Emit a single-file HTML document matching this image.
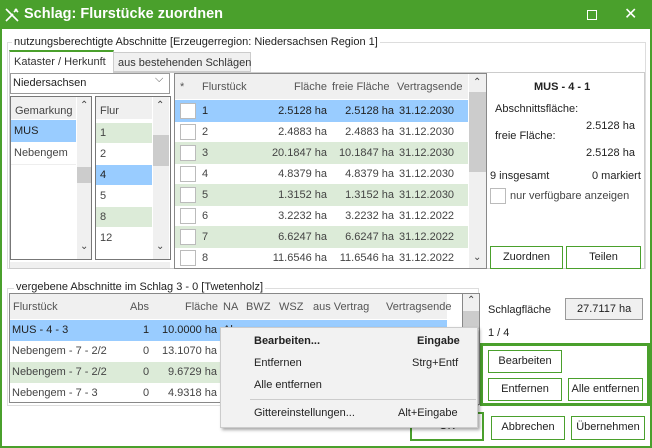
<!DOCTYPE html>
<html><head><meta charset="utf-8"><style>
*{box-sizing:border-box;margin:0;padding:0}
body{width:652px;height:448px;overflow:hidden;font-family:"Liberation Sans",sans-serif;font-size:11px;color:#222;background:#fff;position:relative}
.a{position:absolute}
.t{position:absolute;white-space:nowrap}
.btn{position:absolute;border:1px solid #4aa02c;background:#fff;text-align:center;line-height:21px;font-size:11px;white-space:nowrap}
.row{position:absolute;left:0;right:0;height:22px}
.cb{position:absolute;left:5px;top:3px;width:16px;height:16px;border:1px solid #bbb;background:#fff}
.sb{position:absolute;background:#f0f0f0}
</style></head><body>
<div class="a" style="left:0;top:0;width:652px;height:448px;border:2px solid #4aa02c;border-top:none"></div>
<div class="a" style="left:0;top:0;width:652px;height:29px;background:#4aa02c"></div>
<svg class="a" style="left:4px;top:7px" width="16" height="16" viewBox="0 0 16 16"><path d="M2 2L14 14M2 14L9 7M11 2L14 5M10 5l3-3" stroke="#fff" stroke-width="1.6" fill="none"/></svg>
<div class="t" style="left:24px;top:6px;color:#fff;font-weight:bold;font-size:14.5px">Schlag: Flurstücke zuordnen</div>
<div class="a" style="left:587px;top:10px;width:10px;height:10px;border:1px solid #fff"></div>
<div class="t" style="left:624px;top:4px;color:#fff;font-size:16px">✕</div>

<!-- group 1 -->
<div class="a" style="left:7px;top:42px;width:639px;height:227px;border:1px solid #ddd"></div>
<div class="t" style="left:12px;top:36px;background:#fff;padding:0 2px">nutzungsberechtigte Abschnitte [Erzeugerregion: Niedersachsen Region 1]</div>
<div class="a" style="left:9px;top:72px;width:636px;height:197px;border:1px solid #ccc"></div>
<div class="a" style="left:9px;top:50px;width:105px;height:23px;background:#fff;border:1px solid #ccc;border-top:2px solid #4aa02c;border-bottom:none"></div>
<div class="t" style="left:14px;top:56px;color:#333">Kataster / Herkunft</div>
<div class="a" style="left:113px;top:52px;width:138px;height:20px;background:#f0f0f0;border:1px solid #ccc"></div>
<div class="t" style="left:118px;top:57px;color:#333">aus bestehenden Schlägen</div>

<div class="a" style="left:10px;top:73px;width:160px;height:21px;border:1px solid #999;background:#fff"></div>
<div class="t" style="left:13px;top:77px">Niedersachsen</div>
<div class="t" style="left:155px;top:73px;color:#555;font-size:11px">⌵</div>

<div class="a" style="left:10px;top:96px;width:82px;height:164px;border:1px solid #777;background:#fff"></div>
<div class="a" style="left:11px;top:97px;width:65px;height:22px;background:#f0f0f0"></div>
<div class="t" style="left:15px;top:105px;color:#444">Gemarkung</div>
<div class="a" style="left:11px;top:120px;width:65px;height:22px;background:#99ccff"></div>
<div class="t" style="left:14px;top:125px">MUS</div>
<div class="t" style="left:14px;top:147px;color:#444">Nebengem</div>
<div class="a" style="left:11px;top:164px;width:65px;height:1px;background:#eee"></div>
<div class="sb" style="left:77px;top:97px;width:14px;height:162px"></div>
<div class="a" style="left:77px;top:167px;width:14px;height:16px;background:#ccc"></div>
<div class="t" style="left:80px;top:100px;font-size:10px;color:#444">⌃</div>
<div class="t" style="left:80px;top:241px;font-size:10px;color:#444">⌄</div>
<div class="a" style="left:10px;top:262px;width:160px;height:6px;background:#f0f0f0"></div>

<div class="a" style="left:95px;top:96px;width:76px;height:164px;border:1px solid #777;background:#fff"></div>
<div class="a" style="left:96px;top:97px;width:56px;height:22px;background:#f0f0f0"></div>
<div class="t" style="left:100px;top:105px;color:#444">Flur</div>
<div class="a" style="left:96px;top:123px;width:56px;height:20px;background:#dcebd8"></div>
<div class="t" style="left:100px;top:127px;color:#444">1</div>
<div class="t" style="left:100px;top:148px;color:#444">2</div>
<div class="a" style="left:96px;top:165px;width:56px;height:20px;background:#99ccff"></div>
<div class="t" style="left:100px;top:169px">4</div>
<div class="t" style="left:100px;top:190px;color:#444">5</div>
<div class="a" style="left:96px;top:207px;width:56px;height:20px;background:#dcebd8"></div>
<div class="t" style="left:100px;top:211px;color:#444">8</div>
<div class="t" style="left:100px;top:232px;color:#444">12</div>
<div class="sb" style="left:153px;top:97px;width:16px;height:162px"></div>
<div class="a" style="left:153px;top:135px;width:16px;height:31px;background:#ccc"></div>
<div class="t" style="left:156px;top:100px;font-size:10px;color:#444">⌃</div>
<div class="t" style="left:156px;top:241px;font-size:10px;color:#444">⌄</div>

<!-- grid 1 -->
<div class="a" style="left:174px;top:73px;width:313px;height:196px;border:1px solid #888;background:#fff;overflow:hidden">
 <div class="a" style="left:0;top:0;width:293px;height:25px;background:#f0f0f0"></div>
 <div class="t" style="left:5px;top:7px;color:#555">*</div>
 <div class="t" style="left:27px;top:7px;color:#555">Flurstück</div>
 <div class="t" style="left:106px;top:7px;color:#555;width:46px;text-align:right">Fläche</div>
 <div class="t" style="left:157px;top:7px;color:#555">freie Fläche</div>
 <div class="t" style="left:222px;top:7px;color:#555">Vertragsende</div>
 <div class="a" style="left:0;top:26px;width:293px;height:170px">
  <div class="row" style="top:0;background:#99ccff"><div class="cb"></div><div class="t" style="left:27px;top:5px">1</div><div class="t" style="left:60px;top:5px;width:92px;text-align:right">2.5128 ha</div><div class="t" style="left:150px;top:5px;width:69px;text-align:right">2.5128 ha</div><div class="t" style="left:224px;top:5px">31.12.2030</div></div>
  <div class="row" style="top:21px;color:#444"><div class="cb"></div><div class="t" style="left:27px;top:5px">2</div><div class="t" style="left:60px;top:5px;width:92px;text-align:right">2.4883 ha</div><div class="t" style="left:150px;top:5px;width:69px;text-align:right">2.4883 ha</div><div class="t" style="left:224px;top:5px">31.12.2030</div></div>
  <div class="row" style="top:42px;background:#dcebd8;color:#444"><div class="cb"></div><div class="t" style="left:27px;top:5px">3</div><div class="t" style="left:60px;top:5px;width:92px;text-align:right">20.1847 ha</div><div class="t" style="left:150px;top:5px;width:69px;text-align:right">10.1847 ha</div><div class="t" style="left:224px;top:5px">31.12.2030</div></div>
  <div class="row" style="top:63px;color:#444"><div class="cb"></div><div class="t" style="left:27px;top:5px">4</div><div class="t" style="left:60px;top:5px;width:92px;text-align:right">4.8379 ha</div><div class="t" style="left:150px;top:5px;width:69px;text-align:right">4.8379 ha</div><div class="t" style="left:224px;top:5px">31.12.2030</div></div>
  <div class="row" style="top:84px;background:#dcebd8;color:#444"><div class="cb"></div><div class="t" style="left:27px;top:5px">5</div><div class="t" style="left:60px;top:5px;width:92px;text-align:right">1.3152 ha</div><div class="t" style="left:150px;top:5px;width:69px;text-align:right">1.3152 ha</div><div class="t" style="left:224px;top:5px">31.12.2030</div></div>
  <div class="row" style="top:105px;color:#444"><div class="cb"></div><div class="t" style="left:27px;top:5px">6</div><div class="t" style="left:60px;top:5px;width:92px;text-align:right">3.2232 ha</div><div class="t" style="left:150px;top:5px;width:69px;text-align:right">3.2232 ha</div><div class="t" style="left:224px;top:5px">31.12.2022</div></div>
  <div class="row" style="top:126px;background:#dcebd8;color:#444"><div class="cb"></div><div class="t" style="left:27px;top:5px">7</div><div class="t" style="left:60px;top:5px;width:92px;text-align:right">6.6247 ha</div><div class="t" style="left:150px;top:5px;width:69px;text-align:right">6.6247 ha</div><div class="t" style="left:224px;top:5px">31.12.2022</div></div>
  <div class="row" style="top:147px;color:#444"><div class="cb"></div><div class="t" style="left:27px;top:5px">8</div><div class="t" style="left:60px;top:5px;width:92px;text-align:right">11.6546 ha</div><div class="t" style="left:150px;top:5px;width:69px;text-align:right">11.6546 ha</div><div class="t" style="left:224px;top:5px">31.12.2022</div></div>
 </div>
 <div class="sb" style="left:294px;top:0;width:17px;height:194px"></div>
 <div class="a" style="left:294px;top:18px;width:17px;height:80px;background:#ccc"></div>
 <div class="t" style="left:298px;top:3px;font-size:10px;color:#444">⌃</div>
 <div class="t" style="left:298px;top:178px;font-size:10px;color:#444">⌄</div>
</div>

<!-- right panel 1 -->
<div class="t" style="left:534px;top:81px;font-weight:bold">MUS - 4 - 1</div>
<div class="t" style="left:495px;top:103px">Abschnittsfläche:</div>
<div class="t" style="left:586px;top:120px">2.5128 ha</div>
<div class="t" style="left:495px;top:130px">freie Fläche:</div>
<div class="t" style="left:586px;top:147px">2.5128 ha</div>
<div class="t" style="left:490px;top:170px">9 insgesamt</div>
<div class="t" style="left:592px;top:170px">0 markiert</div>
<div class="a" style="left:490px;top:188px;width:16px;height:16px;border:1px solid #bbb"></div>
<div class="t" style="left:510px;top:190px;color:#444">nur verfügbare anzeigen</div>
<div class="btn" style="left:490px;top:246px;width:73px;height:23px">Zuordnen</div>
<div class="btn" style="left:566px;top:246px;width:75px;height:23px">Teilen</div>

<!-- group 2 -->
<div class="a" style="left:7px;top:288px;width:472px;height:118px;border:1px solid #ddd"></div>
<div class="t" style="left:14px;top:281px;background:#fff;padding:0 2px">vergebene Abschnitte im Schlag 3 - 0 [Twetenholz]</div>
<div class="a" style="left:9px;top:293px;width:462px;height:110px;border:1px solid #888;background:#fff;overflow:hidden">
 <div class="a" style="left:0;top:0;width:437px;height:25px;background:#f0f0f0"></div>
 <div class="t" style="left:3px;top:7px;color:#555">Flurstück</div>
 <div class="t" style="left:120px;top:7px;color:#555">Abs</div>
 <div class="t" style="left:175px;top:7px;color:#555">Fläche</div>
 <div class="t" style="left:213px;top:7px;color:#555">NA</div>
 <div class="t" style="left:236px;top:7px;color:#555">BWZ</div>
 <div class="t" style="left:269px;top:7px;color:#555">WSZ</div>
 <div class="t" style="left:303px;top:7px;color:#555">aus Vertrag</div>
 <div class="t" style="left:376px;top:7px;color:#555">Vertragsende</div>
 <div class="a" style="left:0;top:26px;width:437px;height:21px;background:#99ccff"></div>
 <div class="t" style="left:2px;top:30px">MUS - 4 - 3</div><div class="t" style="left:133px;top:30px">1</div><div class="t" style="left:152px;top:30px">10.0000 ha</div><div class="t" style="left:213px;top:30px">Al</div>
 <div class="t" style="left:2px;top:51px;color:#444">Nebengem - 7 - 2/2</div><div class="t" style="left:133px;top:51px;color:#444">0</div><div class="t" style="left:152px;top:51px;color:#444">13.1070 ha</div>
 <div class="a" style="left:0;top:68px;width:437px;height:21px;background:#dcebd8"></div>
 <div class="t" style="left:2px;top:72px;color:#444">Nebengem - 7 - 2/2</div><div class="t" style="left:133px;top:72px;color:#444">0</div><div class="t" style="left:158px;top:72px;color:#444">9.6729 ha</div>
 <div class="t" style="left:2px;top:93px;color:#444">Nebengem - 7 - 3</div><div class="t" style="left:133px;top:93px;color:#444">0</div><div class="t" style="left:158px;top:93px;color:#444">4.9318 ha</div>
 <div class="sb" style="left:453px;top:0;width:10px;height:110px"></div>
</div>
<div class="a" style="left:462px;top:293px;width:18px;height:112px;border:1px solid #888;background:#f0f0f0"></div>
<div class="a" style="left:463px;top:311px;width:16px;height:18px;background:#ccc"></div>
<div class="t" style="left:467px;top:295px;font-size:10px;color:#444">⌃</div>

<!-- right panel 2 -->
<div class="t" style="left:488px;top:304px">Schlagfläche</div>
<div class="a" style="left:565px;top:298px;width:78px;height:22px;border:1px solid #999;background:#f0f0f0"></div>
<div class="t" style="left:577px;top:303px">27.7117 ha</div>
<div class="t" style="left:488px;top:327px">1 / 4</div>
<div class="a" style="left:480px;top:343px;width:170px;height:63px;border:3px solid #4aa02c"></div>
<div class="btn" style="left:488px;top:350px;width:74px;height:23px">Bearbeiten</div>
<div class="btn" style="left:488px;top:378px;width:74px;height:23px">Entfernen</div>
<div class="btn" style="left:568px;top:378px;width:75px;height:23px">Alle entfernen</div>
<div class="btn" style="left:410px;top:412px;width:74px;height:29px;border:2px solid #4aa02c;line-height:25px">OK</div>
<div class="btn" style="left:491px;top:416px;width:74px;height:24px">Abbrechen</div>
<div class="btn" style="left:571px;top:416px;width:74px;height:24px">Übernehmen</div>

<!-- context menu -->
<div class="a" style="left:220px;top:327px;width:258px;height:101px;background:#f2f2f2;border:1px solid #ccc;box-shadow:2px 2px 3px rgba(0,0,0,.35)"></div>
<div class="t" style="left:254px;top:335px;font-weight:bold">Bearbeiten...</div>
<div class="t" style="left:417px;top:335px;font-weight:bold">Eingabe</div>
<div class="t" style="left:254px;top:357px">Entfernen</div>
<div class="t" style="left:412px;top:357px">Strg+Entf</div>
<div class="t" style="left:254px;top:379px">Alle entfernen</div>
<div class="a" style="left:250px;top:399px;width:226px;height:1px;background:#ccc"></div>
<div class="t" style="left:254px;top:407px">Gittereinstellungen...</div>
<div class="t" style="left:398px;top:407px">Alt+Eingabe</div>
</body></html>
